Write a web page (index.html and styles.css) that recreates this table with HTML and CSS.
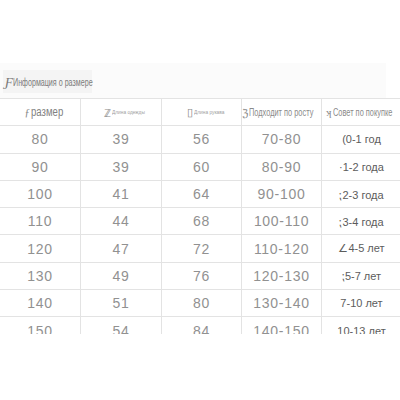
FILE: index.html
```html
<!DOCTYPE html>
<html>
<head>
<meta charset="utf-8">
<link rel="stylesheet" href="styles.css">
</head>
<body>
<div class="sheet">
  <div class="band">
    <div class="title"><span class="glyph">Ƒ</span><span class="narrow">Информация о размере</span></div>
  </div>
  <div class="table">
    <div class="cell head"><span class="hglyph">ƒ</span><span class="narrow">размер</span></div>
    <div class="cell head tiny"><span class="hglyph">ℤ</span><span class="narrow">Длина одежды</span></div>
    <div class="cell head tiny"><span class="hglyph">▯</span><span class="narrow">Длина рукава</span></div>
    <div class="cell head small"><span class="hglyph">ℨ</span><span class="narrow">Подходит по росту</span></div>
    <div class="cell head small"><span class="hglyph">ʞ</span><span class="narrow">Совет по покупке</span></div>

    <div class="cell">80</div><div class="cell">39</div><div class="cell">56</div><div class="cell">70-80</div><div class="cell age">(0-1 год</div>
    <div class="cell">90</div><div class="cell">39</div><div class="cell">60</div><div class="cell">80-90</div><div class="cell age">·1-2 года</div>
    <div class="cell">100</div><div class="cell">41</div><div class="cell">64</div><div class="cell">90-100</div><div class="cell age">⁏2-3 года</div>
    <div class="cell">110</div><div class="cell">44</div><div class="cell">68</div><div class="cell">100-110</div><div class="cell age">⁏3-4 года</div>
    <div class="cell">120</div><div class="cell">47</div><div class="cell">72</div><div class="cell">110-120</div><div class="cell age">∠4-5 лет</div>
    <div class="cell">130</div><div class="cell">49</div><div class="cell">76</div><div class="cell">120-130</div><div class="cell age">⁏5-7 лет</div>
    <div class="cell">140</div><div class="cell">51</div><div class="cell">80</div><div class="cell">130-140</div><div class="cell age">7-10 лет</div>
    <div class="cell">150</div><div class="cell">54</div><div class="cell">84</div><div class="cell">140-150</div><div class="cell age">10-13 лет</div>
  </div>
</div>
</body>
</html>
```
FILE: styles.css
```css
html, body {
  margin: 0;
  padding: 0;
  background: #ffffff;
}
body {
  width: 400px;
  height: 400px;
  overflow: hidden;
  font-family: "Liberation Sans", Arial, sans-serif;
}
.sheet {
  margin-top: 63px;
  height: 271px;
  overflow: hidden;
}
.band {
  height: 35px;
  width: 386px;
  background: #fbfbfb;
  padding: 7px 0 0 3px;
  box-sizing: border-box;
}
.title {
  display: inline-flex;
  align-items: center;
  height: 23px;
  width: 89px;
  padding: 0 0 0 2px;
  box-sizing: border-box;
  background: #f4f4f4;
  color: #7a7a7a;
  font-size: 10.5px;
  overflow: visible;
  white-space: nowrap;
}
.narrow {
  display: inline-block;
  transform: scaleX(0.8);
  transform-origin: left center;
  margin-right: -20%;
}
.title .narrow {
  transform: scaleX(0.68);
}
.head.small .narrow {
  transform: scaleX(0.74);
}
.glyph {
  font-family: "Liberation Serif", serif;
  font-style: italic;
  font-size: 13px;
  color: #777;
}
.table {
  display: grid;
  grid-template-columns: 80px 80px 79px 79px 79px;
  grid-auto-rows: 26.3px;
  gap: 1px;
  background: #e3e3e3;
  border-top: 1px solid #e3e3e3;
  width: 401px;
}
.cell {
  background: #ffffff;
  display: flex;
  align-items: center;
  justify-content: center;
  color: #919191;
  font-size: 14px;
  letter-spacing: 0.7px;
  white-space: nowrap;
  overflow: hidden;
}
.head {
  font-size: 12px;
  letter-spacing: 0;
  color: #7f7f7f;
}
.head.tiny {
  font-size: 6px;
  color: #a0a0a0;
}
.head.small {
  font-size: 10px;
  color: #8a8a8a;
}
.hglyph {
  font-family: "Liberation Serif", serif;
  font-size: 11px;
  color: #888;
  margin-right: 1px;
}
.age {
  font-size: 11px;
  letter-spacing: 0;
  color: #5c5c5c;
}
```
